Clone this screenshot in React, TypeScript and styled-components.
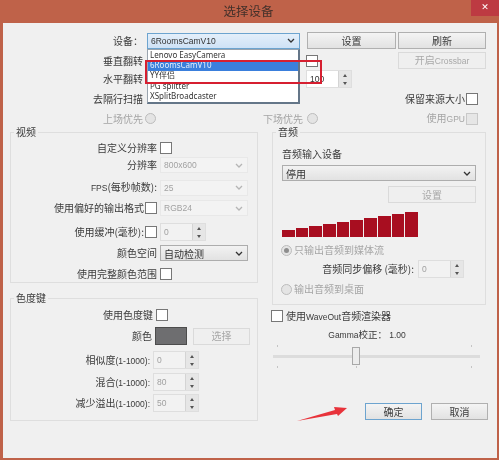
import React from "react";
import styled, { createGlobalStyle } from "styled-components";

const Global = createGlobalStyle`
  html, body { margin: 0; padding: 0; background: #bf6249; }
  body { font-family: "Noto Sans CJK SC", "Liberation Sans", sans-serif; font-size: 10px; color: #333; overflow: hidden; }
`;

const Dialog = styled.div`
  position: relative;
  width: 499px;
  height: 460px;
  background: #bf6249;
  display: flex;
  flex-direction: column;
  filter: blur(0.35px);
`;
const TitleBar = styled.header`
  height: 23px;
  flex: none;
  display: flex;
  align-items: flex-start;
  justify-content: flex-end;
  position: relative;
`;
const Title = styled.h1`
  position: absolute;
  left: 0;
  right: 2px;
  top: 2px;
  margin: 0;
  text-align: center;
  font-size: 12.5px;
  line-height: 18px;
  font-weight: 400;
  color: #43302a;
`;
const CloseBtn = styled.div`
  width: 28px;
  height: 16px;
  background: #bd3a42;
  color: #fff;
  font-size: 9px;
  font-weight: 700;
  line-height: 15px;
  text-align: center;
  font-family: "DejaVu Sans", sans-serif;
`;
const Client = styled.main`
  flex: 1;
  margin: 0 2px 2px 3px;
  background: #f0f0f0;
  padding: 9px 9px 0 7px;
  display: flex;
  flex-direction: column;
`;
const TopRow = styled.div<{ $mt?: number }>`
  display: grid;
  grid-template-columns: 137px 160px 91px 88px;
  height: 16px;
  margin-top: ${(p) => p.$mt ?? 0}px;
  align-items: center;
`;
const Label = styled.span<{ $off?: boolean }>`
  text-align: right;
  white-space: nowrap;
  font-size: 10px;
  line-height: 16px;
  color: ${(p) => (p.$off ? "#a5a5a5" : "#3a3a3a")};
`;
const TopLabel = styled(Label)`
  padding-right: 4px;
`;
const AudioTitle = styled(Label)`
  display: block;
  text-align: left;
`;
const Latin = styled.span`
  font-family: "Liberation Sans", sans-serif;
  font-size: 8.5px;
`;
const Inline = styled.div<{ $end?: boolean; $gap?: number; $shift?: number; $mt?: number; $w?: number; $pr?: number }>`
  display: flex;
  align-items: center;
  justify-content: ${(p) => (p.$end ? "flex-end" : "flex-start")};
  gap: ${(p) => p.$gap ?? 2}px;
  margin-left: ${(p) => p.$shift ?? 0}px;
  margin-top: ${(p) => p.$mt ?? 0}px;
  padding-right: ${(p) => p.$pr ?? 0}px;
  ${(p) => (p.$w ? `width: ${p.$w}px;` : "")}
  white-space: nowrap;
`;
const Check = styled.span<{ $off?: boolean }>`
  flex: none;
  display: block;
  width: 10px;
  height: 10px;
  background: ${(p) => (p.$off ? "#e6e6e6" : "#fff")};
  border: 1px solid ${(p) => (p.$off ? "#c8c8c8" : "#777")};
`;
const Radio = styled.span<{ $on?: boolean }>`
  flex: none;
  display: flex;
  align-items: center;
  justify-content: center;
  width: 9px;
  height: 9px;
  border-radius: 50%;
  background: #e4e4e4;
  border: 1px solid #bcbcbc;
  &::after {
    content: "";
    display: ${(p) => (p.$on ? "block" : "none")};
    width: 5px;
    height: 5px;
    border-radius: 50%;
    background: #8d8d8d;
  }
`;
const Button = styled.button<{ $off?: boolean; $primary?: boolean; $w?: number }>`
  width: ${(p) => (p.$w ? `${p.$w}px` : "100%")};
  height: 17px;
  padding: 0;
  box-sizing: border-box;
  flex: none;
  font: inherit;
  font-size: 10px;
  line-height: 14px;
  color: ${(p) => (p.$off ? "#a8a8a8" : "#3a3a3a")};
  border: 1px solid ${(p) => (p.$primary ? "#6da4cf" : p.$off ? "#dadada" : "#b0b0b0")};
  background: ${(p) => (p.$off ? "#efefef" : "linear-gradient(#f4f4f4, #e2e2e2)")};
`;
const ComboWrap = styled.div`
  position: relative;
  width: 153px;
  height: 16px;
`;
const Combo = styled.div<{ $focus?: boolean; $off?: boolean; $w?: number; $latin?: boolean; $mt?: number }>`
  width: ${(p) => (p.$w ? `${p.$w}px` : "100%")};
  height: 16px;
  margin-top: ${(p) => p.$mt ?? 0}px;
  box-sizing: border-box;
  display: flex;
  align-items: center;
  justify-content: space-between;
  padding: 0 4px 0 3px;
  font-size: ${(p) => (p.$latin ? "8.5px" : "10px")};
  color: ${(p) => (p.$off ? "#a2a2a2" : "#333")};
  font-family: ${(p) =>
    p.$latin ? '"Liberation Sans", sans-serif' : '"Noto Sans CJK SC", sans-serif'};
  border: 1px solid ${(p) => (p.$focus ? "#6da4cf" : p.$off ? "#e8e8e8" : "#adadad")};
  background: ${(p) =>
    p.$focus ? "linear-gradient(#e4effa,#cfe2f6)" : p.$off ? "#f3f3f3" : "linear-gradient(#f2f2f2,#e2e2e2)"};
`;
const Chevron = ({ off }: { off?: boolean }) => (
  <svg width="8" height="5" viewBox="0 0 8 5" fill="none">
    <path d="M1 1l3 3 3-3" stroke={off ? "#b5b5b5" : "#333"} strokeWidth="1.3" />
  </svg>
);
const DropList = styled.ul`
  position: absolute;
  z-index: 2;
  top: 16px;
  left: 0;
  right: 0;
  height: 55px;
  box-sizing: border-box;
  margin: 0;
  padding: 1px 0 0;
  list-style: none;
  background: #fff;
  border: 1px solid #9aa4ae;
  border-right: 2px solid #647688;
  border-bottom: 2px solid #647688;
`;
const DropItem = styled.li<{ $sel?: boolean; $top?: number }>`
  height: 10px;
  line-height: 8px;
  margin-top: ${(p) => p.$top ?? 0}px;
  padding-left: 2px;
  font-family: "Noto Sans", "Noto Sans CJK SC", sans-serif;
  font-size: 8px;
  white-space: nowrap;
  color: ${(p) => (p.$sel ? "#e8f0fb" : "#333")};
  background: ${(p) => (p.$sel ? "#3a7fdc" : "transparent")};
`;
const RedBox = styled.div`
  position: absolute;
  z-index: 3;
  left: -2px;
  top: 27px;
  width: 177px;
  height: 24px;
  box-sizing: border-box;
  border: 2px solid #d61f30;
`;
const SpinBox = styled.div<{ $w?: number; $off?: boolean }>`
  position: relative;
  width: ${(p) => p.$w ?? 46}px;
  height: 18px;
  flex: none;
  box-sizing: border-box;
  background: ${(p) => (p.$off ? "#f2f2f2" : "#fff")};
  border: 1px solid #dedede;
  display: flex;
  align-items: center;
  padding-left: 3px;
  font-family: "Liberation Sans", sans-serif;
  font-size: 8.5px;
  color: ${(p) => (p.$off ? "#a0a0a0" : "#333")};
`;
const SpinBtns = styled.span`
  position: absolute;
  right: 0;
  top: 0;
  bottom: 0;
  width: 12px;
  border-left: 1px solid #d4d4d4;
  background: #e6e6e6;
  display: flex;
  flex-direction: column;
  align-items: center;
  justify-content: space-around;
`;
const Tri = styled.i<{ $down?: boolean }>`
  display: block;
  width: 0;
  height: 0;
  border-left: 2.5px solid transparent;
  border-right: 2.5px solid transparent;
  ${(p) => (p.$down ? "border-top: 3px solid #555;" : "border-bottom: 3px solid #555;")}
`;
const Spin = ({ value, off, w }: { value: string; off?: boolean; w?: number }) => (
  <SpinBox $off={off} $w={w}>
    {value}
    <SpinBtns>
      <Tri />
      <Tri $down />
    </SpinBtns>
  </SpinBox>
);
const Columns = styled.div`
  margin-top: 6px;
  display: grid;
  grid-template-columns: 248px 214px;
  column-gap: 14px;
`;
const Stack = styled.div`
  display: flex;
  flex-direction: column;
`;
const Group = styled.section<{ $h: number; $mt?: number; $pt?: number; $pr?: number }>`
  position: relative;
  box-sizing: border-box;
  height: ${(p) => p.$h}px;
  margin-top: ${(p) => p.$mt ?? 0}px;
  padding-top: ${(p) => p.$pt ?? 7}px;
  padding-right: ${(p) => p.$pr ?? 0}px;
  border: 1px solid #dedede;
`;
const Legend = styled.span`
  position: absolute;
  left: 3px;
  top: -8px;
  padding: 0 2px;
  background: #f0f0f0;
  font-size: 10px;
  line-height: 14px;
  color: #3a3a3a;
`;
const FormRow = styled.div<{ $col: number; $gap?: number; $mt?: number }>`
  display: grid;
  grid-template-columns: ${(p) => p.$col}px 1fr;
  column-gap: ${(p) => p.$gap ?? 3}px;
  align-items: center;
  height: 16px;
  margin-top: ${(p) => p.$mt ?? 0}px;
`;
const Swatch = styled.div`
  width: 32px;
  height: 18px;
  box-sizing: border-box;
  flex: none;
  background: #6e6e70;
  border: 1px solid #4c4c4c;
`;
const AudioBody = styled.div`
  padding: 0 9px;
  display: flex;
  flex-direction: column;
`;
const Bars = styled.div`
  display: flex;
  align-items: flex-end;
  gap: 1px;
  height: 25px;
  margin-top: 9px;
`;
const Bar = styled.span<{ $h: number }>`
  width: 12.7px;
  height: ${(p) => p.$h}px;
  background: #a80e20;
`;
const RadioRow = styled(Inline)`
  height: 16px;
`;
const WaveRow = styled(Inline)`
  height: 16px;
  gap: 3px;
`;
const GammaLabel = styled.div`
  margin-top: 2px;
  width: 190px;
  text-align: center;
  line-height: 16px;
  font-size: 9.5px;
  color: #3a3a3a;
`;
const SliderWrap = styled.div`
  position: relative;
  margin-top: 1px;
  margin-left: 1px;
  width: 207px;
  height: 26px;
`;
const Track = styled.div`
  position: absolute;
  left: 0;
  right: 0;
  top: 11px;
  height: 3px;
  background: #dcdcdc;
`;
const Thumb = styled.div`
  position: absolute;
  left: 79px;
  top: 3px;
  width: 8px;
  height: 18px;
  box-sizing: border-box;
  background: #ececec;
  border: 1px solid #a8a8a8;
`;
const Tick = styled.i<{ $x: number; $y: number }>`
  position: absolute;
  left: ${(p) => p.$x}px;
  top: ${(p) => p.$y}px;
  width: 1px;
  height: 2px;
  background: #c4c4c4;
`;
const Actions = styled.div`
  margin-top: 33px;
  margin-right: -2px;
  display: flex;
  justify-content: flex-end;
  gap: 9px;
`;
const Arrow = styled.svg`
  position: absolute;
  left: 295px;
  top: 404px;
`;

export default function App() {
  return (
    <Dialog>
      <Global />
      <TitleBar>
        <Title>选择设备</Title>
        <CloseBtn>✕</CloseBtn>
      </TitleBar>
      <Client>
        <TopRow>
          <TopLabel>设备：</TopLabel>
          <ComboWrap>
            <Combo $focus $latin>
              <span>6RoomsCamV10</span>
              <Chevron />
            </Combo>
            <DropList>
              <DropItem>Lenovo EasyCamera</DropItem>
              <DropItem $sel>6RoomsCamV10</DropItem>
              <DropItem>YY伴侣</DropItem>
              <DropItem $top={1}>PG splitter</DropItem>
              <DropItem>XSplitBroadcaster</DropItem>
            </DropList>
            <RedBox />
          </ComboWrap>
          <Button $w={89}>设置</Button>
          <Button>刷新</Button>
        </TopRow>
        <TopRow $mt={4}>
          <TopLabel>垂直翻转</TopLabel>
          <span />
          <Inline $shift={-1}>
            <Check />
          </Inline>
          <Button $off>
            开启<Latin>Crossbar</Latin>
          </Button>
        </TopRow>
        <TopRow $mt={2}>
          <TopLabel>水平翻转</TopLabel>
          <span />
          <Inline $shift={-1}>
            <Spin value="100" />
          </Inline>
          <span />
        </TopRow>
        <TopRow $mt={5}>
          <TopLabel>去隔行扫描</TopLabel>
          <span />
          <span />
          <Inline $end $gap={1} $shift={-60} $pr={8}>
            <Label>保留来源大小</Label>
            <Check />
          </Inline>
        </TopRow>
        <TopRow $mt={3}>
          <TopLabel $off>上场优先</TopLabel>
          <Inline $shift={-2}>
            <Radio />
            <Inline $end $pr={4} $w={149}>
              <Label $off>下场优先</Label>
            </Inline>
          </Inline>
          <Inline>
            <Radio />
          </Inline>
          <Inline $end $gap={1} $pr={8}>
            <Label $off>
              使用<Latin>GPU</Latin>
            </Label>
            <Check $off />
          </Inline>
        </TopRow>
        <Columns>
          <Stack>
            <Group $h={151} $pt={7} $pr={9}>
              <Legend>视频</Legend>
              <FormRow $col={146}>
                <Label>自定义分辨率</Label>
                <Inline>
                  <Check />
                </Inline>
              </FormRow>
              <FormRow $col={146} $mt={1}>
                <Label>分辨率</Label>
                <Combo $off $latin>
                  <span>800x600</span>
                  <Chevron off />
                </Combo>
              </FormRow>
              <FormRow $col={146} $mt={6}>
                <Label>
                  <Latin>FPS</Latin>(每秒帧数):
                </Label>
                <Combo $off $latin>
                  <span>25</span>
                  <Chevron off />
                </Combo>
              </FormRow>
              <FormRow $col={146} $mt={5}>
                <Inline $end $gap={1}>
                  <Label>使用偏好的输出格式</Label>
                  <Check />
                </Inline>
                <Combo $off $latin>
                  <span>RGB24</span>
                  <Chevron off />
                </Combo>
              </FormRow>
              <FormRow $col={146} $mt={7}>
                <Inline $end $gap={1}>
                  <Label>使用缓冲(毫秒):</Label>
                  <Check />
                </Inline>
                <Spin value="0" off />
              </FormRow>
              <FormRow $col={146} $mt={6}>
                <Label>颜色空间</Label>
                <Combo>
                  <span>自动检测</span>
                  <Chevron />
                </Combo>
              </FormRow>
              <FormRow $col={146} $mt={5}>
                <Label>使用完整颜色范围</Label>
                <Inline>
                  <Check />
                </Inline>
              </FormRow>
            </Group>
            <Group $h={123} $mt={15} $pt={8}>
              <Legend>色度键</Legend>
              <FormRow $col={142}>
                <Label>使用色度键</Label>
                <Inline>
                  <Check />
                </Inline>
              </FormRow>
              <FormRow $col={141} $mt={4}>
                <Label>颜色</Label>
                <Inline $gap={6}>
                  <Swatch />
                  <Button $off $w={57}>
                    选择
                  </Button>
                </Inline>
              </FormRow>
              <FormRow $col={139} $mt={8}>
                <Label>
                  相似度<Latin>(1-1000):</Latin>
                </Label>
                <Spin value="0" off />
              </FormRow>
              <FormRow $col={139} $mt={6}>
                <Label>
                  混合<Latin>(1-1000):</Latin>
                </Label>
                <Spin value="80" off />
              </FormRow>
              <FormRow $col={139} $mt={5}>
                <Label>
                  减少溢出<Latin>(1-1000):</Latin>
                </Label>
                <Spin value="50" off />
              </FormRow>
            </Group>
          </Stack>
          <Stack>
            <Group $h={173} $pt={13}>
              <Legend>音频</Legend>
              <AudioBody>
                <AudioTitle>音频输入设备</AudioTitle>
                <Combo $mt={3}>
                  <span>停用</span>
                  <Chevron />
                </Combo>
                <Inline $end $mt={5}>
                  <Button $off $w={88}>
                    设置
                  </Button>
                </Inline>
                <Bars>
                  {[7, 9, 11, 13, 15, 17, 19, 21, 23, 25].map((h) => (
                    <Bar key={h} $h={h} />
                  ))}
                </Bars>
                <RadioRow $mt={5} $shift={-1}>
                  <Radio $on />
                  <Label $off>只输出音频到媒体流</Label>
                </RadioRow>
                <Inline $end $mt={2} $w={182} $gap={4}>
                  <Label>音频同步偏移 (毫秒):</Label>
                  <Spin value="0" off />
                </Inline>
                <RadioRow $mt={3} $shift={-1}>
                  <Radio />
                  <Label $off>输出音频到桌面</Label>
                </RadioRow>
              </AudioBody>
            </Group>
            <WaveRow $mt={3} $shift={-1}>
              <Check />
              <Label>
                使用<Latin>WaveOut</Latin>音频渲染器
              </Label>
            </WaveRow>
            <GammaLabel>
              <Latin>Gamma</Latin>校正： <Latin>1.00</Latin>
            </GammaLabel>
            <SliderWrap>
              <Track />
              <Thumb />
              <Tick $x={4} $y={1} />
              <Tick $x={198} $y={1} />
              <Tick $x={4} $y={22} />
              <Tick $x={83} $y={22} />
              <Tick $x={198} $y={22} />
            </SliderWrap>
            <Actions>
              <Button $primary $w={57}>
                确定
              </Button>
              <Button $w={57}>取消</Button>
            </Actions>
          </Stack>
        </Columns>
      </Client>
      <Arrow width="56" height="20" viewBox="0 0 56 20">
        <path d="M2 17L40 6l-1-3 13 1-9 8-1-2z" fill="#e8333b" />
      </Arrow>
    </Dialog>
  );
}
